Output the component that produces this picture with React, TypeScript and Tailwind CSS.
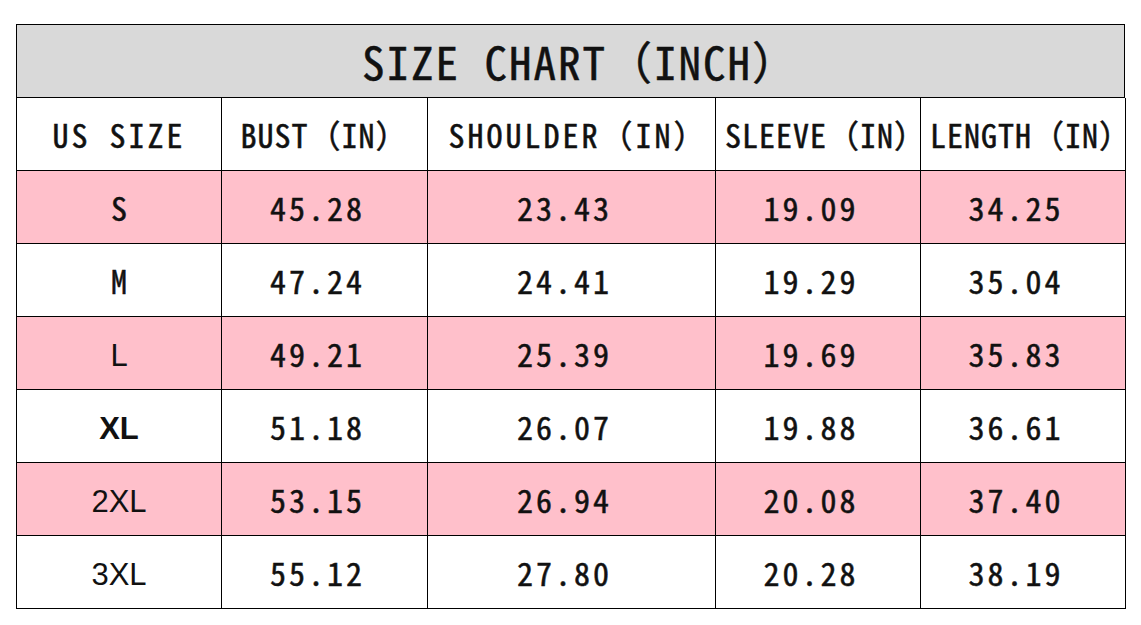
import React from "react";

type Row = {
  size: string;
  sizeStyle: "cjk" | "sans" | "sansBold";
  values: string[];
  pink: boolean;
};

const rows: Row[] = [
  { size: "S", sizeStyle: "cjk", values: ["45.28", "23.43", "19.09", "34.25"], pink: true },
  { size: "M", sizeStyle: "cjk", values: ["47.24", "24.41", "19.29", "35.04"], pink: false },
  { size: "L", sizeStyle: "sans", values: ["49.21", "25.39", "19.69", "35.83"], pink: true },
  { size: "XL", sizeStyle: "sansBold", values: ["51.18", "26.07", "19.88", "36.61"], pink: false },
  { size: "2XL", sizeStyle: "sans", values: ["53.15", "26.94", "20.08", "37.40"], pink: true },
  { size: "3XL", sizeStyle: "sans", values: ["55.12", "27.80", "20.28", "38.19"], pink: false },
];

// label + per-cell spacing tweaks so the visible glyphs sit where the chart has them
const headers = [
  { label: "US SIZE", cls: "tracking-[3px]" },
  { label: "BUST（IN）", cls: "tracking-[1px]" },
  { label: "SHOULDER（IN）", cls: "tracking-[3px] pl-[14px]" },
  { label: "SLEEVE（IN）", cls: "tracking-[1px] pl-[16px]" },
  { label: "LENGTH（IN）", cls: "tracking-[1px] pl-[16px]" },
];

// half-width monospace latin + full-width brackets, like the original chart font
const mono =
  "font-['Noto_Sans_Mono_CJK_SC','Noto_Sans_CJK_SC','DejaVu_Sans_Mono',monospace] font-normal [-webkit-text-stroke:0.5px_#111]";
const sans = "font-['Liberation_Sans',Arial,sans-serif] text-[31px] pt-[6px]";
const cell = "h-[73px] flex items-center justify-center border-r border-b border-black";

export default function App() {
  return (
    <div className="w-[1141px] h-[625px] bg-white pt-[24px] pl-[16px]">
      <div className="w-[1109px] border-t border-l border-black text-[#111]">
        <div className={`${cell} bg-[#d9d9d9]`}>
          <span className={`${mono} text-[45px] tracking-[2px] pl-[20px]`}>SIZE CHART（INCH）</span>
        </div>

        <div className="grid grid-cols-[205px_206px_288px_205px_205px]">
          {headers.map((h) => (
            <div key={h.label} className={cell}>
              <span className={`${mono} text-[32px] whitespace-nowrap ${h.cls}`}>{h.label}</span>
            </div>
          ))}

          {rows.map((r) => (
            <React.Fragment key={r.size}>
              <div className={`${cell} ${r.pink ? "bg-[#ffc0cb]" : "bg-white"}`}>
                {r.sizeStyle === "cjk" && (
                  <span className={`${mono} text-[32px]`}>{r.size}</span>
                )}
                {r.sizeStyle === "sans" && <span className={sans}>{r.size}</span>}
                {r.sizeStyle === "sansBold" && <span className={`${sans} font-bold`}>{r.size}</span>}
              </div>
              {r.values.map((v, j) => (
                <div key={j} className={`${cell} ${r.pink ? "bg-[#ffc0cb]" : "bg-white"}`}>
                  <span className={`${mono} text-[32px] tracking-[3px] pr-[14px]`}>{v}</span>
                </div>
              ))}
            </React.Fragment>
          ))}
        </div>
      </div>
    </div>
  );
}
